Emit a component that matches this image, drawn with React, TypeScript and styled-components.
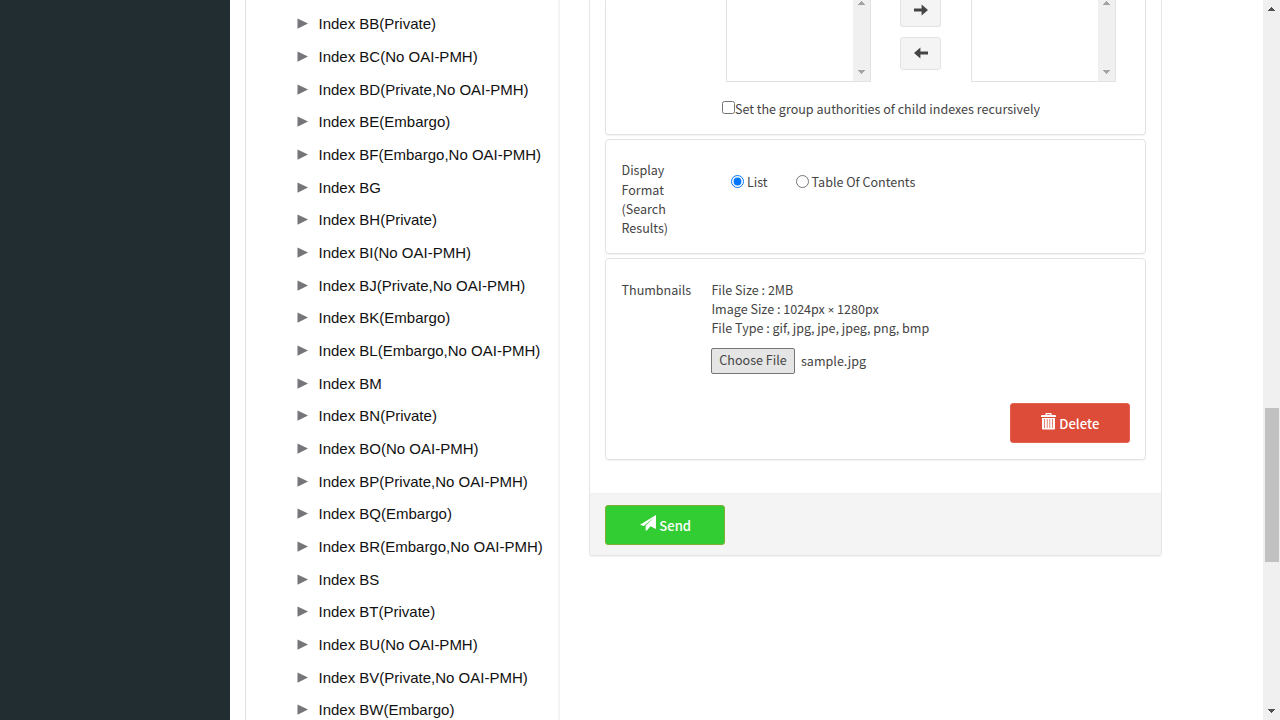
import React from "react";
import styled, { createGlobalStyle } from "styled-components";

const GlobalStyle = createGlobalStyle`
  * { box-sizing: border-box; }
  html, body { margin: 0; height: 720px; overflow: hidden; background: #fff; }
  body {
    font: 12.55px/19.29px "Noto Sans CJK JP", "Source Sans Pro", sans-serif;
    color: #444;
  }
`;

const Page = styled.div`
  display: flex;
  width: 1280px;
  height: 720px;
  overflow: hidden;
`;

const Sidebar = styled.aside`
  flex: 0 0 230px;
  background: #222d32;
`;

const Content = styled.main`
  flex: 1;
  display: flex;
  align-items: flex-start;
  padding-left: 15px;
`;

const TreePanel = styled.nav`
  width: 315px;
  height: 720px;
  padding: 8.1px 0 0 51px;
  border-left: 1px solid #e2e2e2;
  border-right: 2px solid #f3f3f3;
  overflow: hidden;
`;

const TreeRow = styled.div`
  display: flex;
  align-items: center;
  gap: 10.5px;
  height: 32.67px;
  font: 15px/20px "Liberation Sans", Arial, sans-serif;
  color: #111;
  white-space: nowrap;
`;

const Caret = styled.svg`
  flex: none;
  width: 11px;
  height: 12px;
  fill: #75757a;
`;

const FormPanel = styled.section`
  width: 573px;
  height: 556px;
  margin-left: 29px;
  display: flex;
  flex-direction: column;
  border: 1px solid #e5e5e5;
  border-top: 0;
  border-radius: 0 0 3px 3px;
  box-shadow: 0 1px 1px rgba(0, 0, 0, 0.05);
`;

const FormBody = styled.div`
  flex: 0 0 493px;
  padding: 0 15px;
`;

const Card = styled.div<{ $h: number; $open?: boolean }>`
  display: flex;
  height: ${(p) => p.$h}px;
  margin-bottom: 4px;
  border: 1px solid #e3e3e3;
  border-top-width: ${(p) => (p.$open ? 0 : 1)}px;
  border-radius: ${(p) => (p.$open ? "0 0 4px 4px" : "4px")};
  box-shadow: 0 1px 1px rgba(0, 0, 0, 0.05);
`;

const Groups = styled.div`
  padding-left: 116px;
`;

const GroupLists = styled.div`
  display: flex;
  align-items: flex-start;
  padding-left: 4px;
`;

const ListBox = styled.div`
  display: flex;
  justify-content: flex-end;
  width: 145px;
  height: 82px;
  border: solid #e1e1e8;
  border-width: 0 1px 1px;
`;

const ListScroll = styled.div`
  width: 17px;
  height: 81px;
  padding: 0 0 6px;
  display: flex;
  flex-direction: column;
  justify-content: space-between;
  align-items: center;
  background: #f0f0f0;
`;

const Arrow = styled.svg<{ $c: string }>`
  width: 7px;
  height: 5px;
  fill: ${(p) => p.$c};
  shape-rendering: crispEdges;
`;

const MoveButtons = styled.div`
  display: flex;
  flex-direction: column;
  gap: 10px;
  width: 100px;
  padding-left: 29.4px;
`;

const MoveButton = styled.button<{ $cut?: boolean }>`
  display: flex;
  align-items: center;
  justify-content: center;
  width: 41px;
  height: ${(p) => (p.$cut ? 27 : 33)}px;
  padding: 0 0 ${(p) => (p.$cut ? 7 : 1)}px;
  background: #f4f4f4;
  border: 1px solid #e3e3e3;
  border-top-width: ${(p) => (p.$cut ? 0 : 1)}px;
  border-radius: ${(p) => (p.$cut ? "0 0 3px 3px" : "3px")};
`;

const CheckLine = styled.label`
  display: flex;
  align-items: center;
  height: 20px;
  margin-top: 17px;
  padding-left: 0.3px;
  white-space: nowrap;
  span { margin-left: -0.4px; }
`;

const Check = styled.input`
  width: 13px;
  height: 13px;
  margin: 0 0 3px;
`;

const Label = styled.div<{ $top: number }>`
  width: 90px;
  padding: ${(p) => p.$top}px 0 0 15.5px;
  white-space: pre;
`;

const Radios = styled.div`
  display: flex;
  gap: 28px;
  padding: 32px 0 0 35px;
`;

const RadioLabel = styled.label`
  display: flex;
  align-items: center;
  gap: 3px;
  height: 20px;
  white-space: nowrap;
`;

const Radio = styled.input`
  width: 13px;
  height: 13px;
  margin: 0 0 2px;
`;

const Thumbs = styled.div`
  flex: 1;
  display: flex;
  flex-direction: column;
  padding: 20.7px 15px 0 15.4px;
`;

const Times = styled.span`
  font-family: "Noto Sans", sans-serif;
  font-size: 11.5px;
  line-height: 1;
`;

const FileRow = styled.div`
  display: flex;
  align-items: center;
  gap: 6px;
  margin: 10.4px 0 0 -0.4px;
  height: 26px;
`;

const FileButton = styled.button`
  width: 84px;
  height: 26px;
  padding: 0 0 2px;
  border: 1px solid #767676;
  border-radius: 2px;
  background: #e5e5e5;
  color: #444;
  font: inherit;
`;

const FileName = styled.span`
  padding-top: 0;
`;

const Action = styled.button<{ $bg: string; $line: string }>`
  display: flex;
  align-items: center;
  justify-content: center;
  gap: 3px;
  width: 120.4px;
  height: 40px;
  padding: 2px 0 0 1px;
  color: #fff;
  background: ${(p) => p.$bg};
  border: 1px solid ${(p) => p.$line};
  border-radius: 3px;
  font: 500 13.1px/20px "Noto Sans CJK JP", sans-serif;
  svg { margin-bottom: 6px; }
`;

const DeleteRow = styled.div`
  display: flex;
  justify-content: flex-end;
  margin-top: 29.1px;
`;

const FormFooter = styled.footer`
  flex: 1;
  padding: 11px 15px 0;
  border-top: 1px solid #f0f0f0;
  background: #f4f4f4;
`;

const PageScroll = styled.div`
  flex: 0 0 17px;
  display: flex;
  flex-direction: column;
  align-items: center;
  padding-top: 6px;
  background: #f0f0f0;
`;

const Thumb = styled.div`
  width: 14px;
  height: 154px;
  margin: 397px 0 147px;
  background: #c1c1c1;
`;

const kinds = ["", "(Private)", "(No OAI-PMH)", "(Private,No OAI-PMH)", "(Embargo)", "(Embargo,No OAI-PMH)"];
const rows = Array.from("BCDEFGHIJKLMNOPQRSTUVW").map(
  (letter, i) => `Index B${letter}${kinds[(i + 1) % kinds.length]}`
);

const Up = ({ c }: { c: string }) => (
  <Arrow $c={c} viewBox="0 0 7 5"><path d="M3 1h1v1h1v1h1v1h1v1H0V4h1V3h1V2h1z" /></Arrow>
);
const Down = ({ c }: { c: string }) => (
  <Arrow $c={c} viewBox="0 0 7 5"><path d="M0 0h7v1H6v1H5v1H4v1H3V3H2V2H1V1H0z" /></Arrow>
);

const SelectBox = () => (
  <ListBox>
    <ListScroll>
      <Up c="#a3a3a3" />
      <Down c="#a3a3a3" />
    </ListScroll>
  </ListBox>
);

const RightIcon = () => (
  <svg width="14" height="12" viewBox="0 0 14 12" fill="#444"><path d="M0 4.4h7.6V.4L14 6l-6.4 5.6v-4H0z" /></svg>
);
const LeftIcon = () => (
  <svg width="14" height="12" viewBox="0 0 14 12" fill="#444"><path d="M14 4.4H6.4V.4L0 6l6.4 5.6v-4H14z" /></svg>
);
const TrashIcon = () => (
  <svg width="15" height="17" viewBox="0 0 15 17" fill="#fff">
    <path fillRule="evenodd" d="M4.4 2V.9Q4.4 0 5.3 0h4.4q.9 0 .9.9V2H14q1 0 1 1v1H0V3q0-1 1-1zM5.7 2h3.6V1.2H5.7z" />
    <path fillRule="evenodd" d="M1 5h13v10.4q0 1-1 1H2q-1 0-1-1zM3 6v9h.7V6zM5.8 6v9h.7V6zM8.5 6v9h.7V6zM11.3 6v9h.7V6z" />
  </svg>
);
const SendIcon = () => (
  <svg width="16" height="16" viewBox="0 0 16 16" fill="#fff">
    <path d="M16 0v14l-5.5-2.7L7.7 14.4 6.8 15.5H5.6v-4.7L14 2.4 3.8 11 0 9.7z" />
  </svg>
);

export default function App() {
  return (
    <Page>
      <GlobalStyle />
      <Sidebar />
      <Content>
        <TreePanel>
          {rows.map((r) => (
            <TreeRow key={r}>
              <Caret viewBox="0 0 11 12"><path d="M.5 .4 11 5.5 .5 10.7z" /></Caret>
              {r}
            </TreeRow>
          ))}
        </TreePanel>
        <FormPanel>
          <FormBody>
            <Card $h={135} $open>
              <Groups>
                <GroupLists>
                  <SelectBox />
                  <MoveButtons>
                    <MoveButton $cut><RightIcon /></MoveButton>
                    <MoveButton><LeftIcon /></MoveButton>
                  </MoveButtons>
                  <SelectBox />
                </GroupLists>
                <CheckLine>
                  <Check type="checkbox" />
                  <span>Set the group authorities of child indexes recursively</span>
                </CheckLine>
              </Groups>
            </Card>
            <Card $h={115}>
              <Label $top={20.4}>{"Display\nFormat\n(Search\nResults)"}</Label>
              <Radios>
                <RadioLabel><Radio type="radio" name="format" defaultChecked />List</RadioLabel>
                <RadioLabel><Radio type="radio" name="format" />Table Of Contents</RadioLabel>
              </Radios>
            </Card>
            <Card $h={201.5}>
              <Label $top={21.2}>Thumbnails</Label>
              <Thumbs>
                <div>File Size : 2MB</div>
                <div>Image Size : 1024px <Times>×</Times> 1280px</div>
                <div>File Type : gif, jpg, jpe, jpeg, png, bmp</div>
                <FileRow>
                  <FileButton>Choose File</FileButton>
                  <FileName>sample.jpg</FileName>
                </FileRow>
                <DeleteRow>
                  <Action $bg="#dd4b39" $line="#e2604f"><TrashIcon />Delete</Action>
                </DeleteRow>
              </Thumbs>
            </Card>
          </FormBody>
          <FormFooter>
            <Action $bg="#32cd32" $line="#7fae35"><SendIcon />Send</Action>
          </FormFooter>
        </FormPanel>
      </Content>
      <PageScroll>
        <Up c="#505050" />
        <Thumb />
        <Down c="#505050" />
      </PageScroll>
    </Page>
  );
}
